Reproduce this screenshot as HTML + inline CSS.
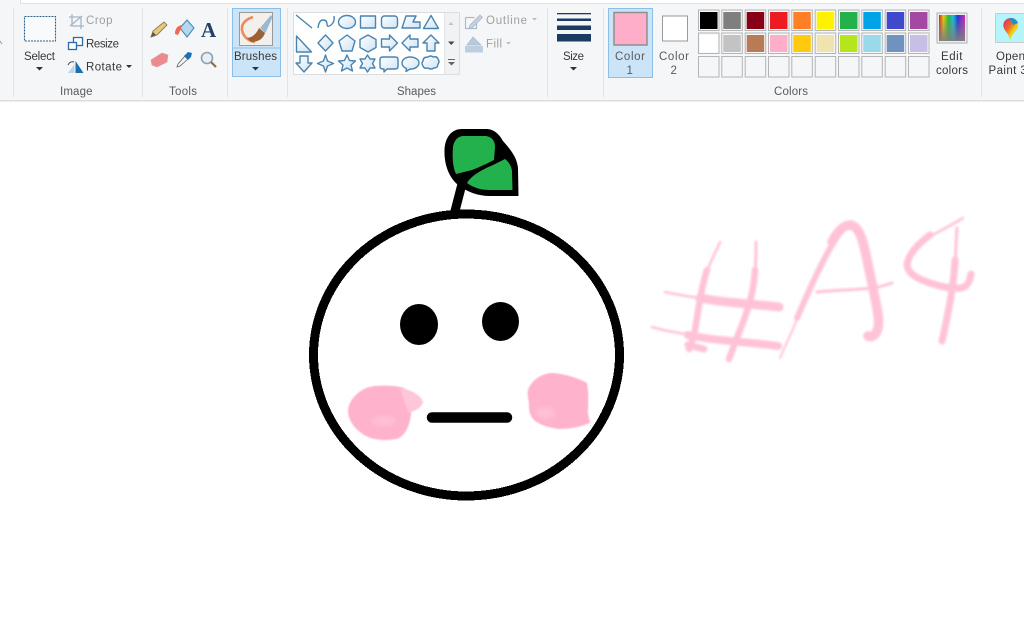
<!DOCTYPE html>
<html><head><meta charset="utf-8"><style>
html,body{margin:0;padding:0;background:#fff;width:1024px;height:622px;overflow:hidden}
svg{display:block;position:absolute;left:0;top:0}
text{font-family:"Liberation Sans",sans-serif;font-size:11.5px;fill:#383838}
.g{fill:#5a5a5a}.d{fill:#a0a0a0}
</style></head><body>
<svg width="1024" height="622" viewBox="0 0 1024 622" xmlns="http://www.w3.org/2000/svg">
<defs>
<linearGradient id="sf" x1="0" y1="0" x2="1" y2="1"><stop offset="0" stop-color="#fff"/><stop offset="1" stop-color="#cfe3f3"/></linearGradient>
<linearGradient id="rb" x1="0" y1="0" x2="1" y2="0"><stop offset="0" stop-color="#e01818"/><stop offset=".17" stop-color="#f0d000"/><stop offset=".36" stop-color="#20c030"/><stop offset=".55" stop-color="#10c0e0"/><stop offset=".72" stop-color="#2030e0"/><stop offset="1" stop-color="#e020b0"/></linearGradient>
<linearGradient id="rb2" x1="0" y1="0" x2="0" y2="1"><stop offset="0" stop-color="#808080" stop-opacity="0"/><stop offset="1" stop-color="#808080" stop-opacity=".95"/></linearGradient>
<linearGradient id="p3" x1="0" y1="0" x2="1" y2="1"><stop offset="0" stop-color="#d82080"/><stop offset=".4" stop-color="#f06a20"/><stop offset=".65" stop-color="#f4d818"/><stop offset="1" stop-color="#30b060"/></linearGradient>
<filter id="b" x="-20%" y="-20%" width="140%" height="140%"><feGaussianBlur stdDeviation="1.1"/></filter>
<filter id="c" x="-20%" y="-20%" width="140%" height="140%"><feGaussianBlur stdDeviation=".9"/></filter>
<filter id="b2" x="-50%" y="-50%" width="200%" height="200%"><feGaussianBlur stdDeviation="1.8"/></filter>
<filter id="s"><feGaussianBlur stdDeviation=".35"/></filter>
</defs>

<!-- ribbon -->
<rect width="1024" height="100" fill="#f5f6f7"/>
<rect x="0" y="100" width="1024" height="1.500" fill="#dcdddf"/>
<rect x="20" y="0" width="1004" height="3" fill="#fff"/>
<rect x="20" y="3" width="1004" height="1" fill="#dfe0e2"/>
<rect x="20" y="0" width="1" height="3" fill="#dfe0e2"/>
<g fill="#e2e3e5">
<rect x="13" y="8" width="1" height="89"/><rect x="142" y="8" width="1" height="89"/><rect x="227" y="8" width="1" height="89"/><rect x="287" y="8" width="1" height="89"/><rect x="547" y="8" width="1" height="89"/><rect x="603" y="8" width="1" height="89"/><rect x="981" y="8" width="1" height="89"/>
</g>
<path d="M0 41l2 3" stroke="#999" fill="none"/>

<g filter="url(#s)">
<!-- select -->
<rect x="24.500" y="16.500" width="31" height="24.500" fill="#f9fafb" stroke="#2f5f8e" stroke-width="1.100" stroke-dasharray="2 1"/>
<path d="M36 67h7l-3.500 3.500z" fill="#333"/>
<!-- crop -->
<path d="M72 14v12h12M69 17h12v12M70 26l12-10" stroke="#a3b5c6" fill="none" stroke-width="1.300"/>
<!-- resize -->
<rect x="73.500" y="37.500" width="9" height="8" fill="#fff" stroke="#2a6ca8" stroke-width="1.300"/>
<rect x="68.500" y="42.500" width="8" height="7" fill="#fff" stroke="#2a6ca8" stroke-width="1.300"/>
<!-- rotate -->
<path d="M75.500 61l8 12h-8z" fill="#1e6fb0"/><path d="M74.500 64v9h-6.500z" fill="#bcd4e6"/><path d="M68 65q2-4 6-3" stroke="#444" fill="none"/>
<path d="M126 65h6l-3 3z" fill="#333"/>
<!-- pencil -->
<path d="M151 37l2-6 11-9 3 3-10 10z" fill="#e8c878" stroke="#8b7d55" stroke-width=".9"/><path d="M151 37l2-5 3 3z" fill="#555"/>
<!-- fill -->
<path d="M180 28l7-8 7 8-7 9z" fill="#b4d8f0" stroke="#4f87b8" stroke-width="1.100"/><path d="M182 25q-7 1-7 9l3 1 3-6z" fill="#ec6a50"/>
<!-- text A -->
<text x="201" y="37" style="font-family:'Liberation Serif',serif;font-size:21px;font-weight:bold;fill:#233f66">A</text>
<!-- eraser -->
<path d="M151 60l11-7 6 2-1 7-10 5-5-2z" fill="#ee8a8e" stroke="#dca0a0" stroke-width=".7"/>
<!-- dropper -->
<path d="M177 67l1-3 7-8 3 3-8 7z" fill="#f4f4f4" stroke="#666" stroke-width=".8"/><path d="M184 56l4-4 4 1-1 4-3 3z" fill="#1e70b8"/>
<!-- magnifier -->
<circle cx="207" cy="58" r="5.500" fill="#e8f0f7" stroke="#8fa0ae" stroke-width="1.600"/><path d="M211 62l5 5" stroke="#8a7050" stroke-width="2.200"/>

<!-- brushes -->
<rect x="232.500" y="8.500" width="48" height="68" fill="#cce4f7" stroke="#8cbfe8"/>
<path d="M233 48h47" stroke="#8cbfe8"/>
<rect x="239.500" y="12.500" width="33" height="33" fill="#f3f0ec" stroke="#9a9a9a"/>
<path d="M253 17q-12 4-11 13 2 10 13 12" fill="none" stroke="#ee8a5c" stroke-width="2.600"/>
<path d="M247 38q8-1 12-10l6 5q-3 9-14 9z" fill="#9b6235"/><path d="M260 28l11-13 1.500 2-7 16z" fill="#9ab8d4"/>
<path d="M252 67h7l-3.500 3.500z" fill="#333"/>

<!-- shapes gallery -->
<rect x="293.500" y="12.500" width="166" height="62" fill="#fff" stroke="#dcdde0"/>
<rect x="444" y="13" width="15" height="61" fill="#f1f2f4"/>
<path d="M444.500 13v61" stroke="#e2e3e6"/>
<path d="M448.500 25l2.500-3 2.500 3z" fill="#c0c0c0"/>
<path d="M448 41.500h6.500l-3.250 3.500z" fill="#444"/>
<path d="M448 59h7v1h-7zM448 62h7l-3.500 3.500z" fill="#666"/>
<g stroke="#4a84b0" stroke-width="1.400" fill="url(#sf)" stroke-linejoin="round">
<path d="M296 15l16 13" fill="none"/>
<path d="M318 28q1-8 5-8t4 4 4 1 3-9" fill="none"/>
<ellipse cx="347" cy="22" rx="8.500" ry="6.500"/>
<rect x="360.500" y="16" width="15" height="12"/>
<rect x="381.500" y="16" width="16" height="12" rx="3"/>
<path d="M402 28l4-12h10l-3 6h7v6z"/>
<path d="M431 15.500l7.500 13h-15z"/>
<path d="M296.500 36v16h15z"/>
<path d="M325.500 35l7.500 8-7.500 8-7.500-8z"/>
<path d="M347 35l8 6-3 10h-10l-3-10z"/>
<path d="M368 35l8 4.500v8l-8 4.500-8-4.500v-8z"/>
<path d="M381.500 39h8v-4l8 8-8 8v-4h-8z"/>
<path d="M418 39h-8v-4l-8 8 8 8v-4h8z"/>
<path d="M431 35l8 8h-4v8h-8v-8h-4z"/>
<path d="M300 56h8v7h4l-8 9-8-9h4z"/>
<path d="M325.500 55l2 6 6 2.500-6 2.500-2 6-2-6-6-2.500 6-2.500z"/>
<path d="M347 55l2.500 5.500 6 .5-4.500 4 1.500 6-5.500-3-5.500 3 1.500-6-4.500-4 6-.5z"/>
<path d="M367.500 55l2.500 4h5l-2.500 4.500 2.500 4.500h-5l-2.500 4-2.500-4h-5l2.500-4.500-2.500-4.500h5z"/>
<path d="M383 57h12q3 0 3 2.500v7q0 2.500-3 2.500h-8l-3 3v-3h-1q-3 0-3-2.500v-7q0-2.500 3-2.500z"/>
<path d="M410 57c-4 0-8 2.500-8 6 0 2.500 2 4.500 4.500 5.500l-.5 3 4-2.500c5 .5 9-3 9-6 0-3.500-4-6-9-6z"/>
<path d="M428 57q3-2 5 0 4-1 5 2 2 3 0 5 0 4-4 4-3 2-6 0-4 1-5-2-2-3 0-5 0-4 5-4z"/>
</g>

<!-- outline / fill -->
<path d="M465.500 17.500h9M465.500 17.500v11h11v-6" fill="none" stroke="#a9bccc" stroke-width="1.200"/><path d="M470 25l10-10 2.500 2.500-10 10-3.500 1z" fill="#c4d2de" stroke="#a5b5c4" stroke-width=".7"/>
<path d="M532 18h5l-2.500 2.500z" fill="#bbb"/>
<path d="M467 45l6-8 8 8z" fill="#b7cbdd" stroke="#a4b9cc" stroke-width=".7"/><rect x="465" y="46" width="18" height="6.500" fill="#bccfe0"/>
<path d="M506 42h5l-2.500 2.500z" fill="#bbb"/>

<!-- size -->
<g fill="#1f3a60"><rect x="557" y="13" width="34" height="1.300"/><rect x="557" y="18.500" width="34" height="2.500"/><rect x="557" y="25.500" width="34" height="4.500"/><rect x="557" y="34" width="34" height="7.500"/></g>
<path d="M570 67h7l-3.500 3.500z" fill="#333"/>

<!-- color buttons -->
<rect x="608.500" y="8.500" width="44" height="69" fill="#cce4f7" stroke="#8cbfe8"/>
<rect x="614" y="12.500" width="33" height="32.500" fill="#ffaec9" stroke="#8f8f8f" stroke-width="1.500"/>
<rect x="662.500" y="16" width="25" height="25" fill="#fff" stroke="#9a9a9a"/>

<!-- palette -->
<g stroke="#b4b4b4" fill="#f8f9fa">
<rect x="698.500" y="10" width="20.500" height="20.500"/><rect x="721.800" y="10" width="20.500" height="20.500"/><rect x="745.200" y="10" width="20.500" height="20.500"/><rect x="768.500" y="10" width="20.500" height="20.500"/><rect x="791.800" y="10" width="20.500" height="20.500"/><rect x="815.200" y="10" width="20.500" height="20.500"/><rect x="838.500" y="10" width="20.500" height="20.500"/><rect x="861.800" y="10" width="20.500" height="20.500"/><rect x="885.200" y="10" width="20.500" height="20.500"/><rect x="908.500" y="10" width="20.500" height="20.500"/>
<rect x="698.500" y="33" width="20.500" height="20.500"/><rect x="721.800" y="33" width="20.500" height="20.500"/><rect x="745.200" y="33" width="20.500" height="20.500"/><rect x="768.500" y="33" width="20.500" height="20.500"/><rect x="791.800" y="33" width="20.500" height="20.500"/><rect x="815.200" y="33" width="20.500" height="20.500"/><rect x="838.500" y="33" width="20.500" height="20.500"/><rect x="861.800" y="33" width="20.500" height="20.500"/><rect x="885.200" y="33" width="20.500" height="20.500"/><rect x="908.500" y="33" width="20.500" height="20.500"/>
<g fill="#f5f6f7"><rect x="698.500" y="56.500" width="20.500" height="20.500"/><rect x="721.800" y="56.500" width="20.500" height="20.500"/><rect x="745.200" y="56.500" width="20.500" height="20.500"/><rect x="768.500" y="56.500" width="20.500" height="20.500"/><rect x="791.800" y="56.500" width="20.500" height="20.500"/><rect x="815.200" y="56.500" width="20.500" height="20.500"/><rect x="838.500" y="56.500" width="20.500" height="20.500"/><rect x="861.800" y="56.500" width="20.500" height="20.500"/><rect x="885.200" y="56.500" width="20.500" height="20.500"/><rect x="908.500" y="56.500" width="20.500" height="20.500"/></g>
</g>
<rect x="700" y="12" width="17.500" height="17" fill="#000"/><rect x="723.300" y="12" width="17.500" height="17" fill="#7f7f7f"/><rect x="746.700" y="12" width="17.500" height="17" fill="#880015"/><rect x="770" y="12" width="17.500" height="17" fill="#ed1c24"/><rect x="793.300" y="12" width="17.500" height="17" fill="#ff7f27"/><rect x="816.700" y="12" width="17.500" height="17" fill="#fff200"/><rect x="840" y="12" width="17.500" height="17" fill="#22b14c"/><rect x="863.300" y="12" width="17.500" height="17" fill="#00a2e8"/><rect x="886.700" y="12" width="17.500" height="17" fill="#3f48cc"/><rect x="910" y="12" width="17.500" height="17" fill="#a349a4"/>
<rect x="700" y="35" width="17.500" height="17" fill="#fff"/><rect x="723.300" y="35" width="17.500" height="17" fill="#c3c3c3"/><rect x="746.700" y="35" width="17.500" height="17" fill="#b97a57"/><rect x="770" y="35" width="17.500" height="17" fill="#ffaec9"/><rect x="793.300" y="35" width="17.500" height="17" fill="#ffc90e"/><rect x="816.700" y="35" width="17.500" height="17" fill="#efe4b0"/><rect x="840" y="35" width="17.500" height="17" fill="#b5e61d"/><rect x="863.300" y="35" width="17.500" height="17" fill="#99d9ea"/><rect x="886.700" y="35" width="17.500" height="17" fill="#7092be"/><rect x="910" y="35" width="17.500" height="17" fill="#c8bfe7"/>

<!-- edit colors -->
<rect x="937" y="13" width="30" height="30" fill="#eee" stroke="#b0b0b0"/>
<rect x="939" y="15" width="26" height="26" fill="url(#rb)"/><rect x="939" y="15" width="26" height="26" fill="url(#rb2)"/>
<!-- paint 3d -->
<rect x="995.500" y="13.500" width="30" height="29" fill="#b4f4fa" stroke="#c4ccd0"/>
<path d="M1011 18c-5 0-8.500 4-7.500 9 1 4 5 6 6.500 13 2-7 7-9 8-13 1-5-2.500-9-7-9z" fill="url(#p3)"/>
<path d="M1011 18c3 0 6 2 7 5l-5 2q-1-4-5-6z" fill="#2090d0"/>
</g>

<!-- labels -->
<g filter="url(#s)">
<text x="24" y="60" textLength="31">Select</text>
<text x="86" y="24" textLength="26.500" class="d">Crop</text>
<text x="86" y="47.500" textLength="33">Resize</text>
<text x="86" y="70.500" textLength="36">Rotate</text>
<text x="60" y="95" textLength="32.500" class="g">Image</text>
<text x="169" y="95" textLength="28" class="g">Tools</text>
<text x="234" y="60" textLength="43">Brushes</text>
<text x="397" y="95" textLength="39" class="g">Shapes</text>
<text x="486" y="24" textLength="41" class="d">Outline</text>
<text x="486" y="47.500" textLength="16" class="d">Fill</text>
<text x="563" y="60" textLength="21">Size</text>
<text x="615" y="60" textLength="30" class="g">Color</text>
<text x="626.500" y="74" class="g">1</text>
<text x="659" y="60" textLength="30" class="g">Color</text>
<text x="670.500" y="74" class="g">2</text>
<text x="941" y="60" textLength="21.500">Edit</text>
<text x="936" y="74" textLength="32">colors</text>
<text x="774" y="95" textLength="34" class="g">Colors</text>
<text x="996" y="60" textLength="29">Open</text>
<text x="988.500" y="74" textLength="47">Paint 3D</text>
</g>

<!-- drawing: face -->
<g fill="none" stroke="#000" stroke-linecap="round" stroke-linejoin="round">
<ellipse cx="466.500" cy="355" rx="153" ry="141" stroke-width="9" shape-rendering="crispEdges"/>
<path d="M462 184l-7 27" stroke-width="9"/>
<path d="M432 417.500h75" stroke-width="10.500"/>
</g>
<ellipse cx="419" cy="324.500" rx="19" ry="20.500"/>
<ellipse cx="500.500" cy="321.500" rx="18.500" ry="19.500"/>
<!-- leaf -->
<path d="M444.500 150C445 138 451 129 462 129H486C494 129 499 134 503 141C510 149 517 157 518 168L518.500 196H490C478 196 468 192 461 187 450 180 444 166 444.500 150Z"/>
<path d="M453 147C454 140 458 136 464 136H486C492 137 495 141 495 147L494 160C488 163 480 167 472 170L456 174C453 168 452 158 453 147Z" fill="#22b14c"/>
<path d="M467 183C471 176 481 170 493 165L505 159C509 162 512 167 512 172L512.500 190H490C481 190 474 188 467 183Z" fill="#22b14c"/>
<!-- cheeks -->
<g fill="#ffb2cc" filter="url(#c)">
<path d="M348 410C349 399 361 387 375 386 388 385 398 386 404 388 409 396 412 408 411 414 410 425 405 437 396 439 385 441 372 440 364 435 355 429 348 421 348 410Z"/>
<path d="M528 390C531 381 541 373 553 373 565 374 578 378 587 383 589 393 588 405 588 413L590 423C580 427 570 429 560 429 551 428 541 426 534 420 529 415 529 409 529 403 528 398 527 394 528 390Z"/>
</g>
<path d="M400 388C410 389 422 396 423 402 421 409 413 412 408 412Z" fill="#ffc6d9" filter="url(#c)"/>
<g fill="#ffc6da" filter="url(#b2)" opacity=".65"><ellipse cx="384" cy="421" rx="12" ry="5"/><ellipse cx="545" cy="413" rx="10" ry="6"/></g>

<!-- #A4 -->
<g fill="none" stroke="#ffb4cc" stroke-linecap="round" stroke-linejoin="round" filter="url(#b)" opacity=".8">
<path d="M720 242C715 254 710 262 707 272" stroke-width="2.500"/><path d="M707 270C702 285 699 305 695 330 693 340 691 345 689 349" stroke-width="6.500"/>
<path d="M756 242C756 252 756 262 755 272" stroke-width="3"/><path d="M755 270C754 295 745 318 738 335L729 359" stroke-width="6.500"/>
<path d="M665 292C678 295 692 297 705 299" stroke-width="2.500"/><path d="M700 298C725 303 755 304 779 307" stroke-width="9"/>
<path d="M652 327C665 331 678 333 692 335" stroke-width="2.500"/><path d="M688 335C715 341 750 342 778 346" stroke-width="8"/>
<path d="M688 345 704 349" stroke-width="7"/>
<path d="M780 358C786 344 793 330 800 312" stroke-width="2"/><path d="M797 318C807 295 823 258 837 237" stroke-width="6"/><path d="M832 242C838 230 844 225 851 225 859 227 863 240 866 255L873 288C876 305 880 318 878 328 876 336 871 338 868 336" stroke-width="9.500"/>
<path d="M817 292C835 290 855 290 873 288 880 287 886 285 892 283" stroke-width="3"/>
<path d="M963 218C950 226 938 232 927 238" stroke-width="2.500"/><path d="M930 235C918 244 908 254 907 265 908 274 918 279 930 283 942 287 953 289 961 288 967 287 970 281 971 274" stroke-width="7"/>
<path d="M957 228C956 240 956 252 955 264" stroke-width="3"/><path d="M955 260C954 285 948 315 942 341" stroke-width="7"/>
</g>
</svg>
</body></html>
